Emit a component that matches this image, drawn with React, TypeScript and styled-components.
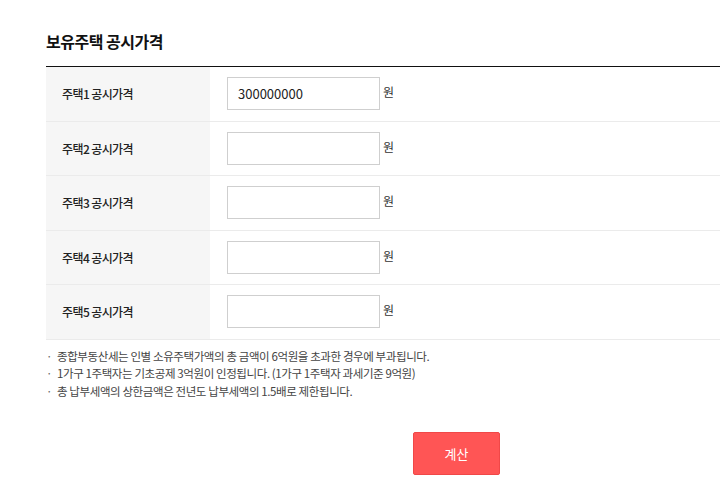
import { createGlobalStyle } from "styled-components";
import styled from "styled-components";

const GlobalStyle = createGlobalStyle`
  html, body {
    margin: 0;
    padding: 0;
    background: #fff;
    font-family: "Noto Sans CJK KR", "Noto Sans", sans-serif;
    color: #222;
  }
`;

const Wrapper = styled.div`
  padding: 31px 0 0 46px;
  overflow: hidden;
`;

const Title = styled.h2`
  margin: 0 0 14px;
  font-size: 16px;
  font-weight: 700;
  line-height: 21px;
  letter-spacing: -0.5px;
  color: #111;
`;

const Table = styled.div`
  border-top: 1px solid #111;
`;

const Row = styled.div`
  display: grid;
  grid-template-columns: 164px 1fr;
  height: 53.5px;
  border-bottom: 1px solid #ebebeb;
`;

const Label = styled.div`
  display: flex;
  align-items: center;
  padding-left: 16px;
  background: #f6f6f6;
  font-size: 12px;
  font-weight: 500;
  letter-spacing: -0.6px;
  color: #222;
`;

const Cell = styled.div`
  display: flex;
  align-items: center;
  gap: 3px;
  padding-left: 17px;
`;

const Input = styled.input`
  box-sizing: border-box;
  width: 153px;
  height: 33px;
  padding: 0 10px;
  border: 1px solid #cfcfcf;
  background: #fff;
  font-family: "Noto Sans CJK KR", "Noto Sans", sans-serif;
  font-size: 13px;
  color: #222;
  outline: none;
`;

const Unit = styled.span`
  font-size: 12px;
  color: #333;
  margin-top: -4px;
`;

const Notes = styled.ul`
  list-style: none;
  margin: 8px 0 0;
  padding: 0;
`;

const Note = styled.li`
  position: relative;
  padding-left: 11px;
  font-size: 11.5px;
  line-height: 17.5px;
  letter-spacing: -0.4px;
  color: #444;

  &::before {
    content: "·";
    position: absolute;
    left: 0;
    top: 0;
    color: #666;
  }
`;

const Actions = styled.div`
  display: flex;
  padding: 32px 0 0 367px;
`;

const Button = styled.button`
  width: 87px;
  height: 43px;
  border: 1px solid #f04848;
  border-radius: 2px;
  background: #ff5555;
  color: #fff;
  font-family: "Noto Sans CJK KR", "Noto Sans", sans-serif;
  font-size: 13px;
  cursor: pointer;
`;

const houses = [
  { label: "주택1 공시가격", value: "300000000" },
  { label: "주택2 공시가격", value: "" },
  { label: "주택3 공시가격", value: "" },
  { label: "주택4 공시가격", value: "" },
  { label: "주택5 공시가격", value: "" },
];

const notes = [
  "종합부동산세는 인별 소유주택가액의 총 금액이 6억원을 초과한 경우에 부과됩니다.",
  "1가구 1주택자는 기초공제 3억원이 인정됩니다. (1가구 1주택자 과세기준 9억원)",
  "총 납부세액의 상한금액은 전년도 납부세액의 1.5배로 제한됩니다.",
];

function App() {
  return (
    <Wrapper>
      <GlobalStyle />
      <Title>보유주택 공시가격</Title>
      <Table>
        {houses.map((h) => (
          <Row key={h.label}>
            <Label>{h.label}</Label>
            <Cell>
              <Input type="text" defaultValue={h.value} />
              <Unit>원</Unit>
            </Cell>
          </Row>
        ))}
      </Table>
      <Notes>
        {notes.map((n) => (
          <Note key={n}>{n}</Note>
        ))}
      </Notes>
      <Actions>
        <Button>계산</Button>
      </Actions>
    </Wrapper>
  );
}

export default App;
